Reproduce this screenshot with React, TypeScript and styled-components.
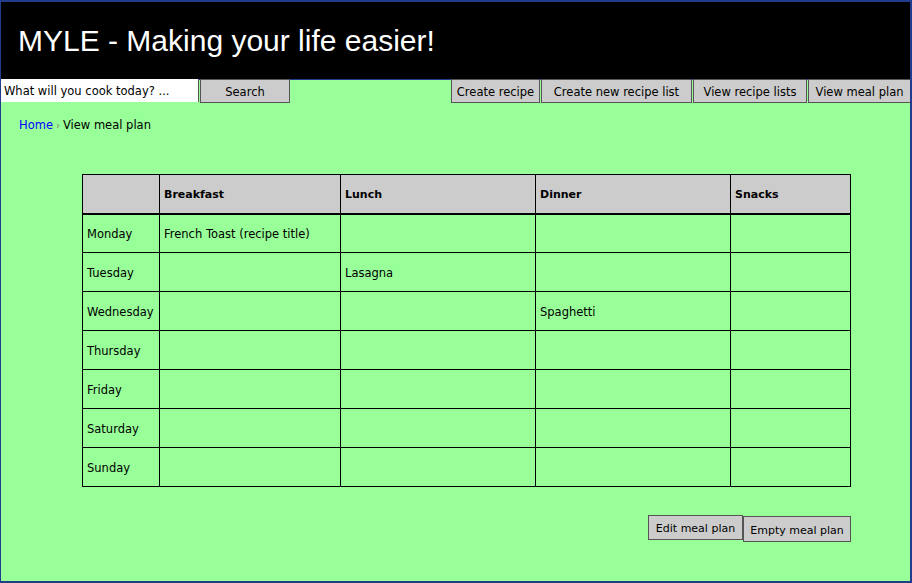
import React from "react";
import styled, { createGlobalStyle } from "styled-components";

const GlobalStyle = createGlobalStyle`
  html, body { margin: 0; padding: 0; background: #ffffff; }
  * { box-sizing: border-box; }
`;

const FONT = `"DejaVu Sans", "Liberation Sans", Arial, sans-serif`;
const TITLE_FONT = `"Liberation Sans", Arial, sans-serif`;

const Frame = styled.div`
  width: 912px;
  height: 583px;
  border: 2px solid #213c8c;
  border-left-width: 1px;
  background: #99ff99;
  display: flex;
  flex-direction: column;
  font-family: ${FONT};
  font-size: 11.5px;
  color: #000;
  overflow: hidden;
`;

const Header = styled.header`
  background: #000;
  height: 77px;
  display: flex;
  align-items: center;
  padding: 0 0 0 17px;
`;

const Title = styled.h1`
  margin: 0;
  color: #fff;
  font-family: ${TITLE_FONT};
  font-weight: 400;
  font-size: 30px;
`;

const Main = styled.main`
  flex: 1;
  border-top: 1px solid #213c8c;
  display: flex;
  flex-direction: column;
`;

const Toolbar = styled.div`
  display: flex;
  align-items: flex-start;
  height: 24px;
  margin-top: -1px;
  margin-left: -1px;
  margin-right: -1px;
`;

const SearchInput = styled.div`
  width: 199px;
  height: 23px;
  background: #fff;
  border-right: 1px solid #555;
  display: flex;
  align-items: center;
  padding: 1px 0 0 4px;
  white-space: nowrap;
  overflow: hidden;
`;

const Button = styled.button<{ $w: number }>`
  width: ${(p) => p.$w}px;
  height: 24px;
  padding: 2px 0 0;
  background: #cccccc;
  border: 1px solid #555;
  font-family: ${FONT};
  font-size: 11.5px;
  color: #000;
  white-space: nowrap;
  cursor: pointer;
`;

const SearchButton = styled(Button)`
  margin-left: 1px;
`;

const Spacer = styled.div`
  flex: 1;
`;

const NavGroup = styled.nav`
  display: flex;
  gap: 1px;
`;

const Breadcrumb = styled.div`
  margin-top: 15px;
  padding-left: 18px;
  display: flex;
  align-items: center;
  gap: 3px;
`;

const Crumb = styled.a`
  color: #0000ff;
  text-decoration: none;
`;

const Sep = styled.span`
  color: #777;
  font-size: 10px;
`;

const Table = styled.table`
  margin: 42px 0 0 81px;
  width: 768px;
  border-collapse: collapse;
  table-layout: fixed;
`;

const Th = styled.th<{ $w: number }>`
  width: ${(p) => p.$w}px;
  height: 39px;
  background: #cccccc;
  border: 1px solid #000;
  border-bottom-width: 2px;
  text-align: left;
  padding: 2px 0 0 4px;
  font-weight: 700;
  font-size: 11px;
`;

const Td = styled.td`
  height: 39px;
  border: 1px solid #000;
  padding: 2px 0 0 4px;
  font-size: 11.5px;
  white-space: nowrap;
`;

const Actions = styled.div`
  display: flex;
  justify-content: flex-end;
  align-items: flex-start;
  margin: 28px 59px 0 0;
`;

const ActionButton = styled(Button)<{ $offset?: number; $h: number }>`
  height: ${(p) => p.$h}px;
  margin-top: ${(p) => p.$offset ?? 0}px;
  font-size: 11px;
`;

const columns = [
  { label: "", w: 77 },
  { label: "Breakfast", w: 181 },
  { label: "Lunch", w: 195 },
  { label: "Dinner", w: 195 },
  { label: "Snacks", w: 120 },
];

const days: { day: string; meals: string[] }[] = [
  { day: "Monday", meals: ["French Toast (recipe title)", "", "", ""] },
  { day: "Tuesday", meals: ["", "Lasagna", "", ""] },
  { day: "Wednesday", meals: ["", "", "Spaghetti", ""] },
  { day: "Thursday", meals: ["", "", "", ""] },
  { day: "Friday", meals: ["", "", "", ""] },
  { day: "Saturday", meals: ["", "", "", ""] },
  { day: "Sunday", meals: ["", "", "", ""] },
];

export default function App() {
  return (
    <>
      <GlobalStyle />
      <Frame>
        <Header>
          <Title>MYLE - Making your life easier!</Title>
        </Header>
        <Main>
          <Toolbar>
            <SearchInput>What will you cook today? ...</SearchInput>
            <SearchButton $w={90}>Search</SearchButton>
            <Spacer />
            <NavGroup>
              <Button $w={89}>Create recipe</Button>
              <Button $w={151}>Create new recipe list</Button>
              <Button $w={114}>View recipe lists</Button>
              <Button $w={103}>View meal plan</Button>
            </NavGroup>
          </Toolbar>
          <Breadcrumb>
            <Crumb href="#">Home</Crumb>
            <Sep>›</Sep>
            <span>View meal plan</span>
          </Breadcrumb>
          <Table>
            <thead>
              <tr>
                {columns.map((c) => (
                  <Th key={c.label || "blank"} $w={c.w}>
                    {c.label}
                  </Th>
                ))}
              </tr>
            </thead>
            <tbody>
              {days.map((d) => (
                <tr key={d.day}>
                  <Td>{d.day}</Td>
                  {d.meals.map((m, i) => (
                    <Td key={i}>{m}</Td>
                  ))}
                </tr>
              ))}
            </tbody>
          </Table>
          <Actions>
            <ActionButton $w={95} $h={25}>
              Edit meal plan
            </ActionButton>
            <ActionButton $w={108} $h={26} $offset={1}>
              Empty meal plan
            </ActionButton>
          </Actions>
        </Main>
      </Frame>
    </>
  );
}
